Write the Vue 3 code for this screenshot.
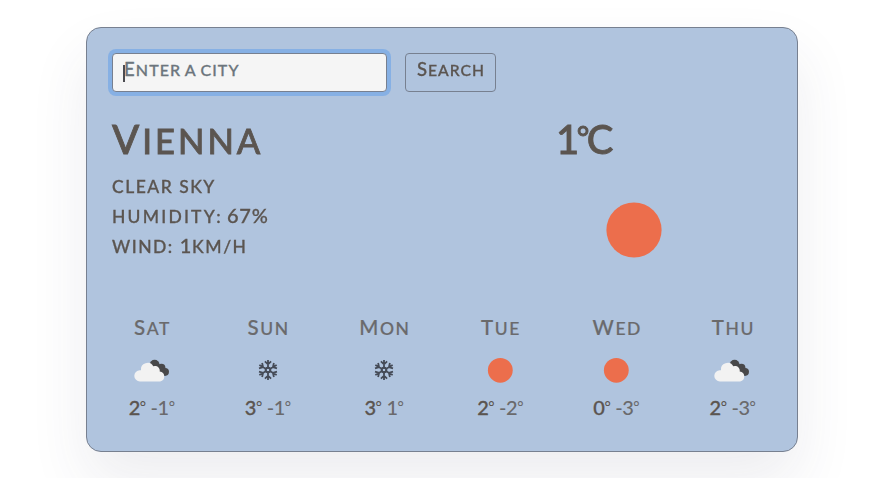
<script setup>
import { ref, onMounted } from 'vue'

const city = ref('')
const field = ref(null)

const forecast = [
  { day: 'Sat', icon: 'cloud', max: '2', min: '-1' },
  { day: 'Sun', icon: 'snow', max: '3', min: '-1' },
  { day: 'Mon', icon: 'snow', max: '3', min: '1' },
  { day: 'Tue', icon: 'sun', max: '2', min: '-2' },
  { day: 'Wed', icon: 'sun', max: '0', min: '-3' },
  { day: 'Thu', icon: 'cloud', max: '2', min: '-3' },
]

onMounted(() => field.value?.focus())
</script>

<template>
  <main class="page">
    <section class="card">
      <form class="search" @submit.prevent>
        <label class="field">
          <span class="caret"></span>
          <span v-if="!city" class="placeholder">Enter a city</span>
          <input ref="field" v-model="city" type="text" />
        </label>
        <button type="submit"><span class="label">Search</span></button>
      </form>

      <div class="current">
        <div class="place">
          <h1>Vienna</h1>
          <ul>
            <li class="sky">CLEAR SKY</li>
            <li class="humidity">HUMIDITY: <b>67%</b></li>
            <li class="wind">WIND: <b>1</b>KM/H</li>
          </ul>
        </div>
        <div class="now">
          <div class="degrees">1<span class="deg">°</span>C</div>
          <svg class="big-sun" viewBox="0 0 56 56"><circle cx="28" cy="28" r="27.6" fill="#ec6e4c" /></svg>
        </div>
      </div>

      <div class="forecast">
        <div v-for="item in forecast" :key="item.day" class="day">
          <div class="name">{{ item.day }}</div>
          <svg class="icon" viewBox="0 0 50 50">
            <circle v-if="item.icon === 'sun'" cx="25.3" cy="25.3" r="12.4" fill="#ec6e4c" />
            <g v-else-if="item.icon === 'cloud'" transform="translate(-1 .5)">
              <g fill="#48484a">
                <circle cx="28.6" cy="19.2" r="4.9" />
                <circle cx="35.4" cy="22.3" r="4" />
                <circle cx="39.1" cy="26.3" r="3.9" />
                <path d="M27 20h9l4 10H30z" />
              </g>
              <path
                d="M14 35.9a5.6 5.6 0 0 1-.2-11.2h1.2a6.6 6.6 0 0 1 12.3-4 4.8 4.8 0 0 1 6.4 5.3 5 5 0 0 1 .4 9.9z"
                fill="#f2f2f2"
              />
            </g>
            <g v-else fill="none" stroke="#454b57" stroke-width="1.8">
              <g v-for="angle in [0, 60, 120, 180, 240, 300]" :key="angle" :transform="`rotate(${angle} 25 25)`">
                <path d="M25 23V15M21.9 16.4 25 19.3 28.1 16.4M22.7 23.7 25 22.4 27.3 23.7" />
              </g>
            </g>
          </svg>
          <div class="temps">
            <span class="max">{{ item.max }}<span class="deg">°</span></span>
            <span class="min">{{ item.min }}<span class="deg">°</span></span>
          </div>
        </div>
      </div>
    </section>
  </main>
</template>

<style>
body {
  background: #fff;
}
</style>

<style scoped>
* {
  box-sizing: border-box;
}
.page {
  height: 478px;
  overflow: hidden;
  padding: 27px 0 0 86px;
  font-family: Lato, "Liberation Sans", sans-serif;
  font-weight: 500;
  color: #5b5550;
  -webkit-text-stroke: 0.3px currentColor;
}
.card {
  width: 712px;
  height: 425px;
  padding: 25px;
  border: 1px solid #778090;
  border-radius: 15px;
  background: #b0c4de;
  box-shadow: 0 30px 60px rgba(50, 50, 93, 0.09);
}
.search {
  display: flex;
  gap: 18px;
}
.field {
  display: flex;
  align-items: center;
  width: 275px;
  height: 39px;
  padding: 0 0 0 10px;
  border: 1px solid #778090;
  border-radius: 4px;
  background: #f5f5f5;
  box-shadow: 0 0 0 4px #86b0e4;
}
.caret {
  width: 2px;
  height: 17px;
  margin-top: 1px;
  background: #4b4b50;
}
.field input {
  flex: 1;
  width: 0;
  border: 0;
  outline: 0;
  background: transparent;
  font: inherit;
  caret-color: transparent;
}
.placeholder {
  display: block;
  height: 26px;
  margin: 0 0 6px -1px;
  line-height: 24px;
  font-size: 16px;
  letter-spacing: 1.1px;
  word-spacing: -1px;
  text-transform: uppercase;
  white-space: nowrap;
  color: #6c757d;
}
.placeholder::first-letter {
  font-size: 18.5px;
}
button {
  width: 91px;
  height: 39px;
  padding: 0 0 6px 1px;
  border: 1px solid #778090;
  border-radius: 4px;
  background: transparent;
  color: inherit;
  font: inherit;
}
.label {
  display: block;
  line-height: 24px;
  font-size: 15.7px;
  letter-spacing: 1px;
  text-transform: uppercase;
}
.label::first-letter {
  font-size: 18.5px;
}
.current {
  display: grid;
  grid-template-columns: 444px 1fr;
  height: 220px;
  padding-top: 22px;
}
h1 {
  margin: 0;
  height: 57px;
  line-height: 50px;
  font-size: 34.5px;
  font-weight: 500;
  letter-spacing: 3px;
  text-transform: uppercase;
  -webkit-text-stroke-width: 0.8px;
}
h1::first-letter {
  font-size: 40px;
}
ul {
  margin: 0;
  padding: 0;
  list-style: none;
}
li {
  height: 30px;
  line-height: 30px;
  font-size: 17.5px;
  letter-spacing: 1.5px;
  white-space: nowrap;
}
.sky {
  padding-top: 1px;
}
.humidity {
  letter-spacing: 2.2px;
  word-spacing: -2.5px;
}
li b {
  font-size: 20px;
  line-height: 20px;
  font-weight: 500;
  letter-spacing: 0.8px;
}
.humidity,
.wind {
  line-height: 32px;
}
.degrees {
  height: 50px;
  line-height: 50px;
  font-size: 40px;
  letter-spacing: -2.5px;
  -webkit-text-stroke-width: 0.8px;
}
.deg {
  font-size: 0.76em;
  line-height: 0;
  vertical-align: 0.2em;
}
.temps .deg {
  -webkit-text-stroke-width: 0;
}
.big-sun {
  display: block;
  width: 56px;
  height: 56px;
  margin: 38px 0 0 50px;
}
.forecast {
  display: grid;
  grid-template-columns: repeat(6, 1fr);
  margin: 0 -18.5px;
}
.day {
  display: flex;
  flex-direction: column;
  align-items: center;
}
.name {
  height: 32px;
  line-height: 30px;
  font-size: 17.5px;
  letter-spacing: 1.6px;
  padding-left: 2px;
  text-transform: uppercase;
  color: #6a6a6c;
  -webkit-text-stroke-width: 0.2px;
}
.name::first-letter {
  font-size: 20.5px;
}
.icon {
  width: 50px;
  height: 50px;
  margin-top: 1px;
}
.temps {
  display: flex;
  gap: 5px;
  margin-top: -3px;
  line-height: 30px;
  font-size: 20px;
  letter-spacing: -0.5px;
}
.min {
  color: #6a6a6c;
  -webkit-text-stroke-width: 0;
}
</style>
